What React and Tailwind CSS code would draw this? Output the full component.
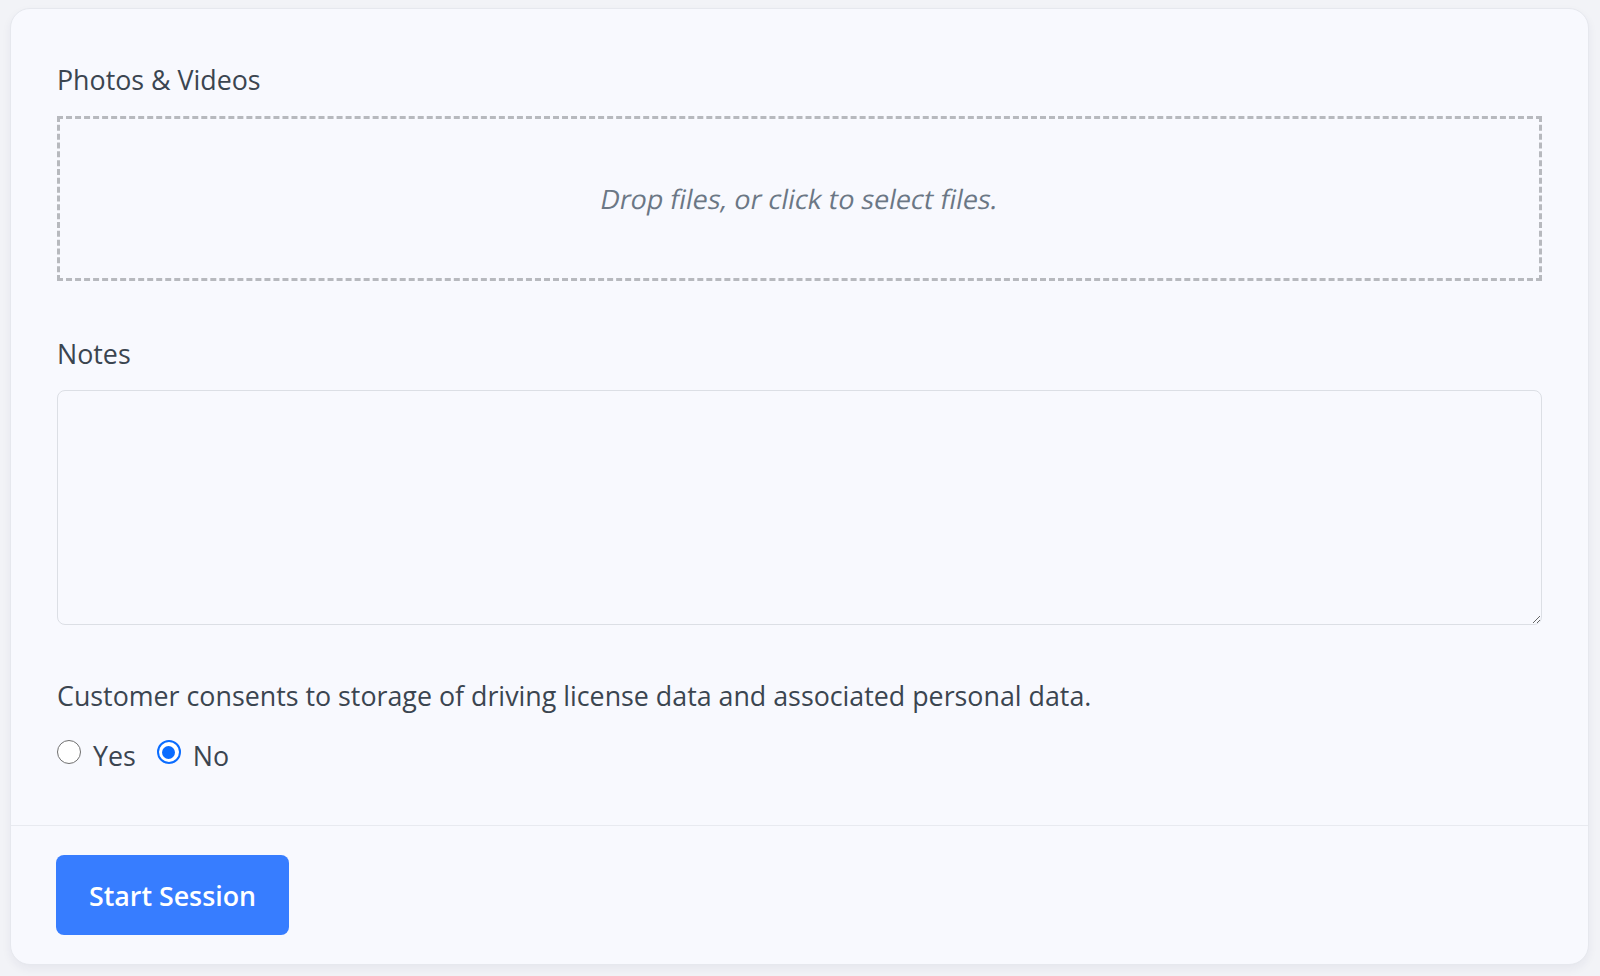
import { useState } from "react";

const Radio = ({ checked, label, onChange }) => (
  <label className="flex items-center cursor-pointer" onClick={onChange}>
    <span
      className={`w-6 h-6 rounded-full flex items-center justify-center mr-[12px] -mt-[6px] ${
        checked ? 'border-[2.5px] border-[#0a6cff] bg-white' : 'border-[1.5px] border-[#6f6f6f] bg-white'
      }`}
    >
      {checked && <span className="w-[13px] h-[13px] rounded-full bg-[#0a6cff]" />}
    </span>
    <span className="pt-[2px]">{label}</span>
  </label>
);

export default function App() {
  const [consent, setConsent] = useState('no');
  const [notes, setNotes] = useState('');

  return (
    <div className="min-h-screen bg-[#f2f3f7] pt-[8px] px-[10px] font-['Open_Sans',sans-serif] text-[26.8px] leading-[42px] text-[#3b4550]">
      <div className="w-[1579px] bg-[#f8f9fe] border border-[#e6e8ee] rounded-[20px] shadow-[0_4px_10px_rgba(30,40,80,0.06)]">
        {/* Body */}
        <div className="px-[46px] pt-[48px] pb-[48px]">
          <p className="pt-[2px] mb-[15px]">Photos &amp; Videos</p>
          <div className="h-[165px] border-[3px] border-dashed border-[#b7b9be] flex items-center justify-center cursor-pointer">
            <span className="inline-block -skew-x-[11deg] text-[#6b7785] pt-[1px]">Drop files, or click to select files.</span>
          </div>

          <p className="pt-[2px] mt-[50px] mb-[15px]">Notes</p>
          <textarea
            value={notes}
            onChange={(e) => setNotes(e.target.value)}
            className="block w-full h-[235px] bg-[#f8f9fe] border-[1.5px] border-[#dcdfe5] rounded-[8px] px-4 py-3 outline-none"
          />

          <p className="pt-[1px] mt-[49px]">Customer consents to storage of driving license data and associated personal data.</p>
          <div className="flex items-center gap-[21px] mt-[16px]">
            <Radio checked={consent === 'yes'} label="Yes" onChange={() => setConsent('yes')} />
            <Radio checked={consent === 'no'} label="No" onChange={() => setConsent('no')} />
          </div>
        </div>

        {/* Footer */}
        <div className="border-t border-[#e8eaf0] px-[45px] pt-[29px] pb-[29px]">
          <button className="h-[80px] w-[233px] pt-[2px] rounded-[8px] bg-[#377dff] text-white font-semibold text-[26.8px] hover:bg-[#2b6ee8] transition">
            Start Session
          </button>
        </div>
      </div>
    </div>
  );
}
